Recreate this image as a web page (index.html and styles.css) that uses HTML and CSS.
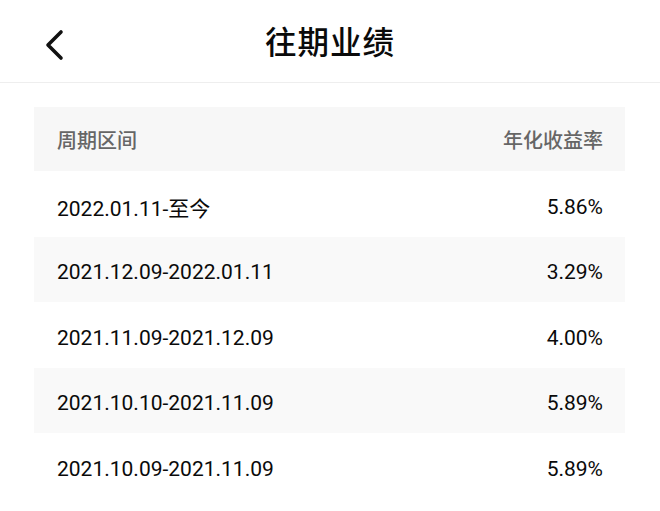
FILE: index.html
```html
<!DOCTYPE html>
<html lang="zh">
<head>
<meta charset="utf-8">
<link rel="stylesheet" href="styles.css">
</head>
<body>
<div class="page">
  <header class="topbar">
    <span class="back">
      <svg width="22" height="32" viewBox="0 0 22 32"><path d="M18 3 L5 16 L18 29" fill="none" stroke="#111" stroke-width="3.6" stroke-linecap="round" stroke-linejoin="round"/></svg>
    </span>
    <h1 class="title">往期业绩</h1>
  </header>
  <div class="table">
    <div class="row head"><span>周期区间</span><span>年化收益率</span></div>
    <div class="row"><span>2022.01.11-至今</span><span>5.86%</span></div>
    <div class="row alt"><span>2021.12.09-2022.01.11</span><span>3.29%</span></div>
    <div class="row"><span>2021.11.09-2021.12.09</span><span>4.00%</span></div>
    <div class="row alt"><span>2021.10.10-2021.11.09</span><span>5.89%</span></div>
    <div class="row"><span>2021.10.09-2021.11.09</span><span>5.89%</span></div>
  </div>
</div>
</body>
</html>
```
FILE: styles.css
```css
html, body { margin: 0; padding: 0; background: #fff; }
.page { width: 660px; height: 511px; overflow: hidden; font-family: Roboto, "Noto Sans CJK SC", sans-serif; color: #0a0a0a; }
.topbar { height: 82px; border-bottom: 1px solid #eeeeee; position: relative; display: flex; align-items: center; justify-content: center; }
.back { position: absolute; left: 43px; top: 29px; display: flex; }
.title { margin: 0; font-family: "Noto Sans CJK SC", sans-serif; font-weight: 500; font-size: 31.5px; letter-spacing: 1px; line-height: 1; padding-bottom: 0; }
.table { margin: 24px 35px 0 34px; }
.row { box-sizing: border-box; display: flex; justify-content: space-between; align-items: center; height: 65.5px; padding: 6px 22px 0 23px; font-size: 21px; }
.row.head { height: 64px; padding-top: 0; background: #f7f7f7; color: #666; font-family: "Noto Sans CJK SC", sans-serif; font-weight: 500; font-size: 20px; }
.row.alt { background: #f9f9f9; }
```
